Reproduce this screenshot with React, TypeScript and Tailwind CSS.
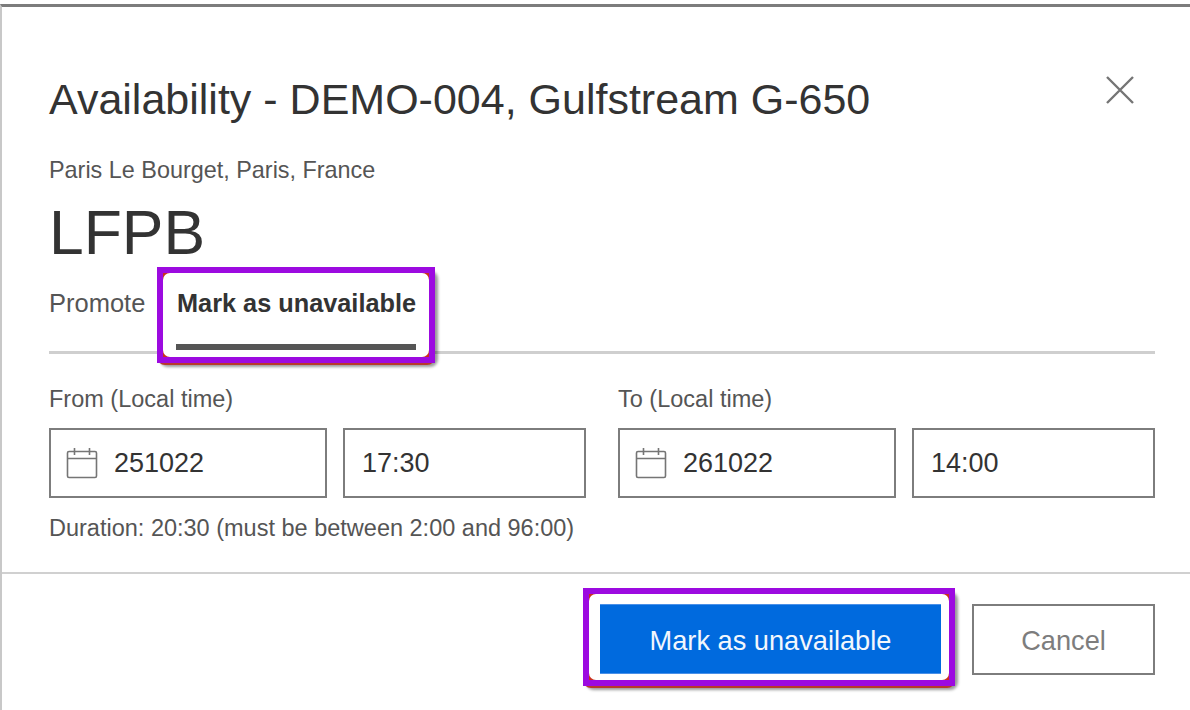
import React from "react";

function CalendarIcon() {
  return (
    <svg width="32" height="32" viewBox="0 0 32 32" fill="none" stroke="#757575" strokeWidth="1.6" className="shrink-0">
      <rect x="1.5" y="4.5" width="29" height="26" rx="1.5" />
      <path d="M1.5 11.5H30.5M8.5 1V8M23.5 1V8" />
    </svg>
  );
}

function DateTimeField({ label, date, time }: { label: string; date: string; time: string }) {
  return (
    <div className="flex flex-col">
      <div className="h-[30px] text-[23.5px] leading-[30px] text-[#555]">{label}</div>
      <div className="mt-[14px] flex gap-4">
        <div className="flex h-[70px] w-[278px] items-center gap-[16px] border-2 border-[#7d7d7d] pl-[15px]">
          <CalendarIcon />
          <span className="text-[27px] text-[#333]">{date}</span>
        </div>
        <div className="flex h-[70px] flex-1 items-center border-2 border-[#7d7d7d] pl-[17px]">
          <span className="text-[27px] text-[#333]">{time}</span>
        </div>
      </div>
    </div>
  );
}

export default function App() {
  return (
    <div className="h-[710px] w-[1190px] overflow-hidden bg-white pt-1 font-['Liberation_Sans',Arial,sans-serif]">
      <div className="flex h-[706px] flex-col border-t-[3px] border-l-2 border-t-[#7c7c7c] border-l-[#c8c8c8]">
        <div className="flex-1 pr-[35px] pl-[47px]">
          <div className="flex h-[118px] items-end justify-between">
            <h1 className="text-[43px] leading-[52px] font-normal whitespace-nowrap text-[#333]">Availability - DEMO-004, Gulfstream G-650</h1>
            <svg width="30" height="30" viewBox="0 0 30 30" stroke="#757575" strokeWidth="2.4" className="mr-[20px] mb-[20px]">
              <path d="M2 2L28 28M28 2L2 28" />
            </svg>
          </div>
          <div className="mt-[30px] text-[23.4px] leading-[30px] text-[#555]">Paris Le Bourget, Paris, France</div>
          <div className="mt-[13px] text-[62.4px] leading-[70px] text-[#333]">LFPB</div>
          <div className="-mt-[1px] flex items-stretch border-b-[3px] border-b-[#cfcfcf]">
            <div className="flex w-[108px] pt-[21px] text-[25.5px] leading-[30px] text-[#555]">Promote</div>
            <div className="relative -mb-[12px] h-[96px] w-[278px] rounded-[8px] bg-[#c9301f] shadow-[0_2px_0_#b8392c,3px_4px_3px_rgba(0,0,0,0.4)]">
              <div className="h-full w-full border-[6px] border-[#9c0ae0]">
                <div className="flex h-full flex-col rounded-[7px] bg-white px-[13px]">
                  <div className="mt-[15px] ml-px text-[25.3px] leading-[30px] font-bold whitespace-nowrap text-[#333]">Mark as unavailable</div>
                  <div className="mt-[26px] h-[6px] bg-[#555]" />
                </div>
              </div>
            </div>
          </div>
          <div className="mt-[30px] grid grid-cols-2 gap-8">
            <DateTimeField label="From (Local time)" date="251022" time="17:30" />
            <DateTimeField label="To (Local time)" date="261022" time="14:00" />
          </div>
          <div className="mt-[15px] text-[23.5px] leading-[30px] text-[#555]">Duration: 20:30 (must be between 2:00 and 96:00)</div>
        </div>
        <div className="flex h-[138px] items-start justify-end gap-[17px] border-t-2 border-t-[#d0d0d0] pt-[14px] pr-[35px]">
          <div className="h-[98px] w-[372px] rounded-[8px] bg-[#c9301f] shadow-[0_2px_0_#b8392c,3px_4px_3px_rgba(0,0,0,0.4)]">
            <div className="h-full w-full border-[6px] border-[#9c0ae0]">
              <div className="flex h-full rounded-[7px] bg-white pt-[10px] pr-[8px] pb-[6px] pl-[11px]">
                <button className="flex h-[70px] w-full items-center justify-center border-y border-y-[#4a90e8] bg-[#006ade] pt-[4px] text-[27.2px] text-[#f2f7fd]">Mark as unavailable</button>
              </div>
            </div>
          </div>
          <button className="mt-[16px] flex h-[71px] w-[183px] items-center justify-center border-2 border-[#7d7d7d] pt-[3px] text-[27.2px] text-[#7d7d7d]">Cancel</button>
        </div>
      </div>
    </div>
  );
}
